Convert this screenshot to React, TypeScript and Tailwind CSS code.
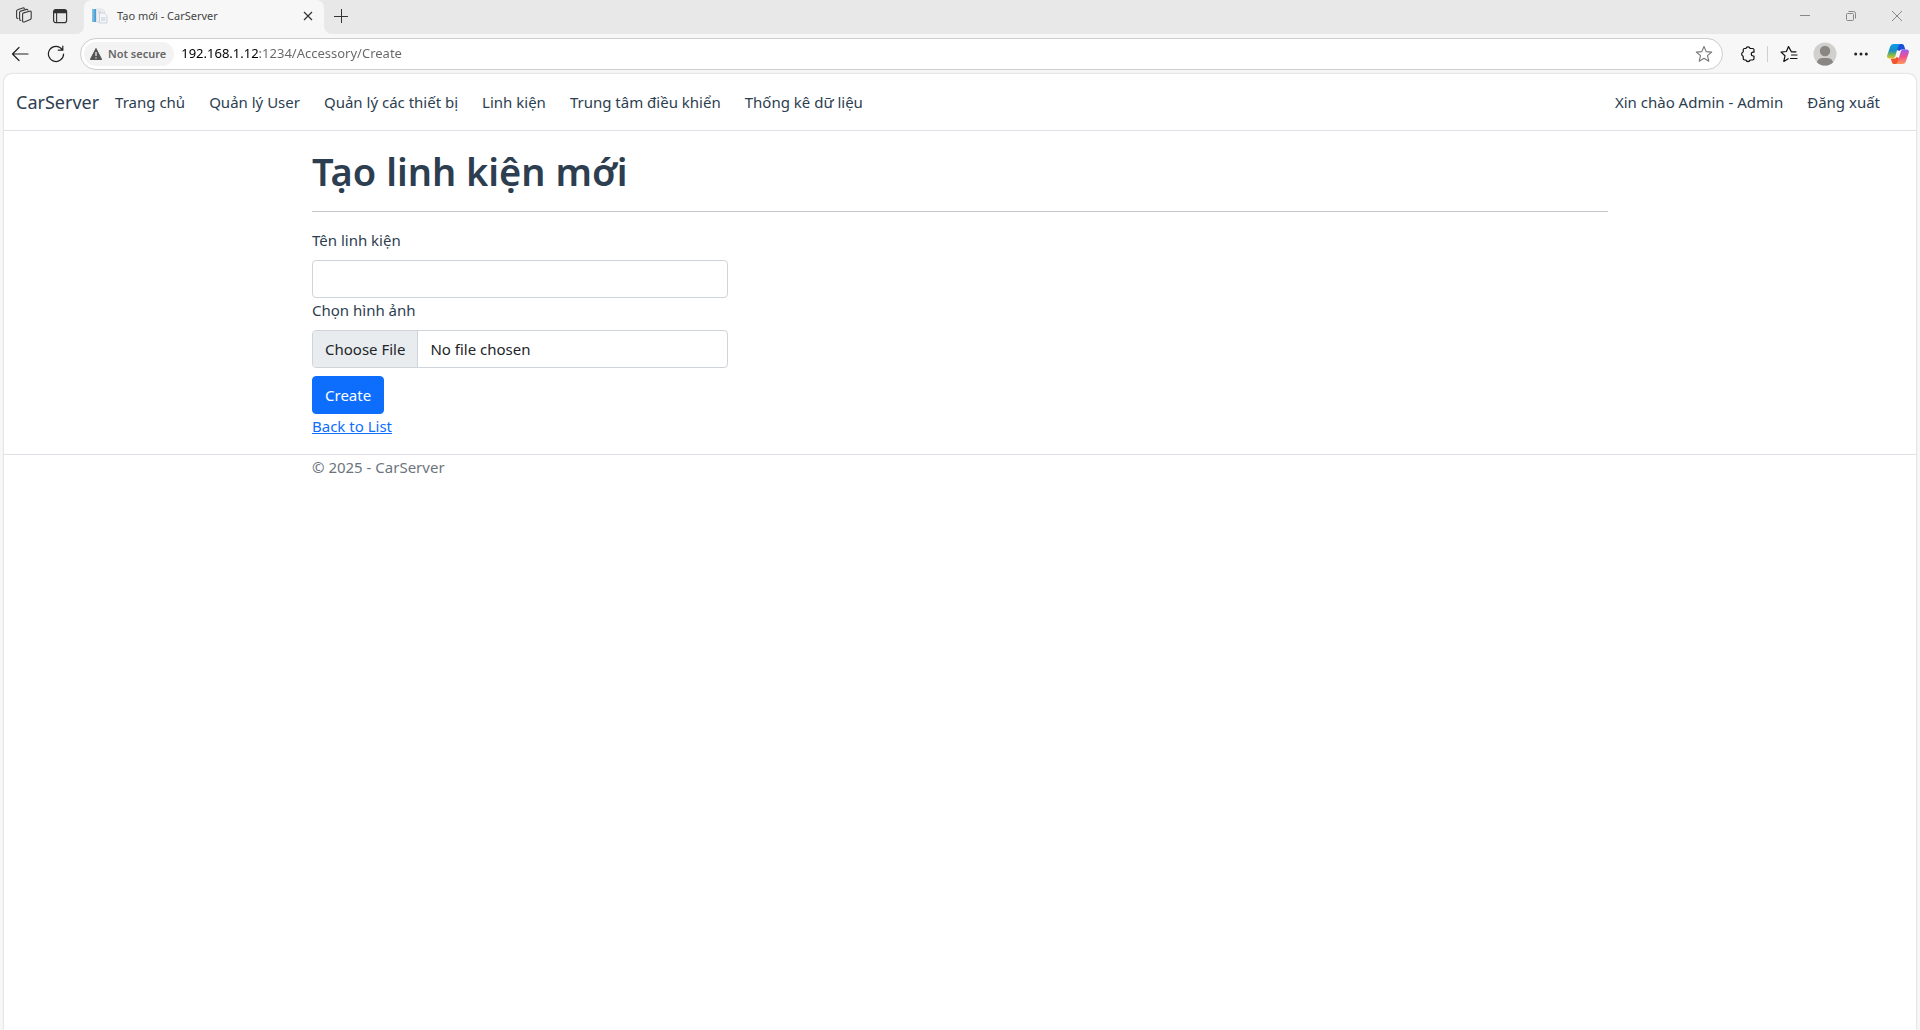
import React from 'react';

const menu = [
  'Trang chủ',
  'Quản lý User',
  'Quản lý các thiết bị',
  'Linh kiện',
  'Trung tâm điều khiển',
  'Thống kê dữ liệu',
];

function IconButton({ label, className, children }: { label: string; className?: string; children: React.ReactNode }) {
  return (
    <button type="button" aria-label={label} className={`flex shrink-0 items-center justify-center ${className ?? ''}`}>
      {children}
    </button>
  );
}

function WorkspacesIcon() {
  return (
    <svg width="18" height="18" viewBox="0 0 18 18" fill="none" stroke="#3b3b3b" strokeWidth="1.1" strokeLinejoin="round" strokeLinecap="round">
      <path d="M7.600 7.200q0-1 1-1.300l6-1.700q1.600-.4 1.600 1v5.900q0 1-.9 1.400l-6 2.400q-1.700.6-1.700-1z" />
      <path d="M5.800 13.400q-1.200 0-1.200-1.200V5.400q0-1 1-1.300l5.700-1.700q1.400-.3 1.600.8" />
      <path d="M2.900 11.500q-1.300 0-1.300-1.300V4q0-1 1-1.300L7.800 1q1.200-.3 1.600.5" />
    </svg>
  );
}

function TabActionsIcon() {
  return (
    <svg width="16" height="16" viewBox="0 0 16 16" fill="none">
      <rect x="1.600" y="1.600" width="13" height="13" rx="2.200" stroke="#333" strokeWidth="1.200" />
      <path d="M1.500 5.200V3.600q0-2.100 2.100-2.100h8.800q2.100 0 2.100 2.100v1.600z" fill="#333" />
      <path d="M4.600 5v9.500" stroke="#333" strokeWidth="1.100" />
    </svg>
  );
}

function PageIcon() {
  return (
    <svg width="16" height="16" viewBox="0 0 16 16" fill="none">
      <defs>
        <linearGradient id="page-spine">
          <stop offset="0" stopColor="#8cc8ea" />
          <stop offset="1" stopColor="#4096cc" />
        </linearGradient>
      </defs>
      <path d="M0 1h4v13H0z" fill="url(#page-spine)" />
      <path d="M4.500 1h6l2 2v11h-8z" fill="#eceef2" stroke="#d8dbe0" strokeWidth=".8" />
      <path d="M7.500 5h5l2.500 2.500V15H7.500z" fill="#f5f6f9" stroke="#c4cad5" strokeWidth=".8" />
      <path d="M9 10h4.500M9 12h4.500M6 4h3" stroke="#c0cadb" />
    </svg>
  );
}

function StarIcon() {
  return (
    <svg width="18" height="18" viewBox="0 0 18 18" fill="none" stroke="#777" strokeWidth="1.100" strokeLinejoin="round">
      <path d="m9 1.500 2.200 5.100 5.500.5-4.200 3.600 1.300 5.500L9 13.300l-4.800 2.900 1.300-5.500L1.300 7.100l5.500-.5z" />
    </svg>
  );
}

function PuzzleIcon() {
  return (
    <svg width="18" height="18" viewBox="0 0 18 18" fill="none" stroke="#111" strokeWidth="1.200" strokeLinejoin="round">
      <path d="M6.900 3.500a2.200 2.200 0 0 1 4.200 0h2.400q1.500 0 1.500 1.400v2.300h-.8a1.900 1.900 0 0 0 0 3.800h.8v2.600q0 1.400-1.500 1.400h-2.400a2.200 2.200 0 0 1-4.200 0H5.600q-1.400 0-1.400-1.400V11.200a2.200 2.200 0 0 1 0-4.200V4.900q0-1.400 1.400-1.400z" />
    </svg>
  );
}

function FavoritesIcon() {
  return (
    <svg width="18" height="18" viewBox="0 0 18 18" fill="none" stroke="#111" strokeWidth="1.200" strokeLinejoin="round" strokeLinecap="round">
      <path d="M16 6.800h-4.600L8.500 1.600 6.400 6.500 1 7.100l4 3.700-1.200 5.600 4.400-2.700" />
      <path d="M11.500 10H17M10.500 13.500H17" />
    </svg>
  );
}

function ProfileIcon() {
  return (
    <svg width="24" height="24" viewBox="0 0 24 24">
      <defs>
        <clipPath id="profile-disc">
          <circle cx="12" cy="12" r="11.500" />
        </clipPath>
      </defs>
      <circle cx="12" cy="12" r="11.500" fill="#d2d0ce" />
      <g fill="#8a8683" clipPath="url(#profile-disc)">
        <circle cx="12" cy="9" r="5.200" />
        <path d="M3.500 24q0-8 6-8h5q6 0 6 8z" />
      </g>
    </svg>
  );
}

function CopilotIcon() {
  return (
    <svg width="24" height="24" viewBox="0 0 24 24">
      <defs>
        <linearGradient id="cp-left" x1="0" y1="0" x2="0" y2="1">
          <stop offset="0" stopColor="#0a9bea" />
          <stop offset=".45" stopColor="#1a90c5" />
          <stop offset=".75" stopColor="#7cb950" />
          <stop offset="1" stopColor="#f0c820" />
        </linearGradient>
        <linearGradient id="cp-right" x1="0" y1="0" x2="0" y2="1">
          <stop offset="0" stopColor="#9a5cf5" />
          <stop offset=".5" stopColor="#f0508d" />
          <stop offset="1" stopColor="#ff9a5a" />
        </linearGradient>
      </defs>
      <path d="M11 2h5q1.500 0 2 1.500L19.300 7.500h-3.800q-1.500 0-2 1.500L11 8z" fill="#1b4fd8" />
      <path d="M13 22H8q-1.500 0-2-1.500L4.700 16.500h3.800q1.500 0 2-1.500L13 16z" fill="#f0562f" />
      <path d="M14.500 2H7.300Q5 2 4.200 4.500L1.300 13Q.3 16.500 3.600 16.500h3.400q1.600 0 2.200-2L12 5Q12.600 2.500 14.500 2z" fill="url(#cp-left)" />
      <path d="M9.500 22h7.200q2.300 0 3.100-2.500l2.900-8.500q1-3.500-2.300-3.500H17q-1.600 0-2.200 2L12 19Q11.400 21.500 9.500 22z" fill="url(#cp-right)" />
    </svg>
  );
}

function TabStrip() {
  return (
    <div className="flex h-[34px] items-stretch bg-[#e8e8e8]">
      <div className="flex w-[84px] shrink-0 items-stretch bg-[#f7f7f7]">
        <div className="flex flex-1 items-center gap-[19px] rounded-br-lg bg-[#e8e8e8] pb-0.5 pl-[15px]">
          <IconButton label="Workspaces"><WorkspacesIcon /></IconButton>
          <IconButton label="Tab actions"><TabActionsIcon /></IconButton>
        </div>
      </div>
      <div className="flex w-60 shrink-0 items-center rounded-t-lg bg-[#f7f7f7] px-2 pb-0.5">
        <PageIcon />
        <span className="ml-[9px] flex-1 text-[11px] text-[#444]">Tạo mới - CarServer</span>
        <IconButton label="Close tab" className="size-4">
          <svg width="10" height="10" viewBox="0 0 10 10" stroke="#333" strokeWidth="1.200"><path d="m1 1 8 8M9 1 1 9" /></svg>
        </IconButton>
      </div>
      <div className="flex flex-1 items-stretch bg-[#f7f7f7]">
        <div className="flex flex-1 items-center rounded-bl-lg bg-[#e8e8e8] pb-0.5 pl-2 pr-[17px]">
          <IconButton label="New tab" className="size-[18px]">
            <svg width="14" height="14" viewBox="0 0 14 14" stroke="#333" strokeWidth="1"><path d="M7.500 0v14M0 7.500h14" /></svg>
          </IconButton>
          <div className="ml-auto flex items-center gap-[34px]">
            <IconButton label="Minimize" className="size-3">
              <svg width="10" height="10" viewBox="0 0 10 10" stroke="#888"><path d="M0 4.500h10" /></svg>
            </IconButton>
            <IconButton label="Restore" className="size-3">
              <svg width="10" height="10" viewBox="0 0 10 10" fill="none" stroke="#888"><rect x=".5" y="2.500" width="7" height="7" rx="1" /><path d="M2.500.5h5q2 0 2 2v5" /></svg>
            </IconButton>
            <IconButton label="Close window" className="size-3">
              <svg width="10" height="10" viewBox="0 0 10 10" stroke="#888"><path d="m0 0 10 10M10 0 0 10" /></svg>
            </IconButton>
          </div>
        </div>
      </div>
    </div>
  );
}

function AddressBar() {
  return (
    <div className="flex h-10 items-center bg-[#f7f7f7] px-2.5">
      <IconButton label="Back" className="size-5">
        <svg width="18" height="16" viewBox="0 0 18 16" fill="none" stroke="#222" strokeWidth="1.200" strokeLinecap="round" strokeLinejoin="round"><path d="M17 8H1.500M8 1.500 1.500 8 8 14.500" /></svg>
      </IconButton>
      <IconButton label="Refresh" className="ml-4 size-5">
        <svg width="18" height="18" viewBox="0 0 18 18" fill="none" stroke="#222" strokeWidth="1.200" strokeLinecap="round"><path d="M15.200 4.500A7.600 7.600 0 1 0 16.600 9M15.800 1v4.200h-4.500" /></svg>
      </IconButton>
      <div className="ml-3.5 flex h-8 flex-1 items-center rounded-full border border-[#cdcdcd] bg-white pl-[3px] pr-[9px]">
        <button type="button" className="flex h-6 shrink-0 items-center gap-1.5 rounded-full bg-[#f3f3f3] pl-1.5 pr-2 text-[11px] font-semibold text-[#666]">
          <svg width="12" height="12" viewBox="0 0 12 12"><path d="M6 .5 11.700 11.500H.3z" fill="#555" stroke="#555" strokeLinejoin="round" /><path d="M6 4v4M6 9.200v1.200" stroke="#f3f3f3" strokeWidth="1.200" /></svg>
          Not secure
        </button>
        <input
          type="text"
          aria-label="Address"
          defaultValue="192.168.1.12:1234/Accessory/Create"
          className="ml-[7px] min-w-0 flex-1 bg-linear-to-r from-black from-[78px] to-[#666] to-[78px] bg-clip-text text-[13px] text-transparent caret-black outline-none"
        />
        <IconButton label="Add to favorites"><StarIcon /></IconButton>
      </div>
      <div className="ml-4 flex items-center">
        <IconButton label="Extensions"><PuzzleIcon /></IconButton>
        <span className="ml-2.5 h-4 w-px bg-[#d0d0d0]" />
        <IconButton label="Favorites" className="ml-3"><FavoritesIcon /></IconButton>
        <IconButton label="Profile" className="ml-[15px]"><ProfileIcon /></IconButton>
        <IconButton label="Settings and more" className="ml-3.5 size-5">
          <svg width="14" height="4" viewBox="0 0 14 4" fill="#222"><circle cx="1.700" cy="2" r="1.500" /><circle cx="7" cy="2" r="1.500" /><circle cx="12.300" cy="2" r="1.500" /></svg>
        </IconButton>
        <IconButton label="Copilot" className="ml-[15px]"><CopilotIcon /></IconButton>
      </div>
    </div>
  );
}

function Navbar() {
  return (
    <header className="border-b border-[#dee2e6]">
      <nav className="flex h-14 items-center px-3">
        <a href="#" className="mr-4 text-[18px] leading-[30px]">CarServer</a>
        <ul className="flex flex-1 gap-6">
          {menu.map((item) => (
            <li key={item}><a href="#">{item}</a></li>
          ))}
        </ul>
        <ul className="flex gap-6 pr-6">
          <li><a href="#">Xin chào Admin - Admin</a></li>
          <li><a href="#">Đăng xuất</a></li>
        </ul>
      </nav>
    </header>
  );
}

export default function App() {
  return (
    <div className="flex min-h-screen flex-col bg-[#f7f7f7] font-['Noto_Sans',sans-serif]">
      <TabStrip />
      <AddressBar />
      <div className="mx-1 flex-1 rounded-t-lg bg-white text-[15px] leading-6 text-[#2c3e50] shadow-[0_0_2px_rgba(0,0,0,0.25)]">
        <Navbar />
        <main className="mx-auto max-w-[1296px] py-4">
          <h1 className="text-[38px] font-semibold leading-[48px]">Tạo linh kiện mới</h1>
          <hr className="my-4 h-px border-0 bg-[#c3c6ca]" />
          <form className="max-w-[416px]" onSubmit={(e) => e.preventDefault()}>
            <label htmlFor="accessory-name" className="mb-2 block">Tên linh kiện</label>
            <input id="accessory-name" type="text" className="block h-[38px] w-full rounded border border-[#ced4da] px-3 text-[#212529]" />
            <label htmlFor="accessory-image" className="mb-2 block">Chọn hình ảnh</label>
            <input
              id="accessory-image"
              type="file"
              className="block h-[38px] w-full overflow-hidden rounded border border-[#ced4da] text-[#212529] file:mr-3 file:h-9 file:border-r file:border-[#ced4da] file:bg-[#e9ecef] file:px-3 file:text-[#212529]"
            />
            <button type="submit" className="mt-2 block h-[38px] rounded border border-[#0d6efd] bg-[#0d6efd] px-3 text-white">Create</button>
          </form>
          <a href="#" className="text-[#0d6efd] underline">Back to List</a>
        </main>
        <footer className="border-t border-[#dee2e6] text-[#6c757d]">
          <p className="mx-auto max-w-[1296px]">© 2025 - CarServer</p>
        </footer>
      </div>
    </div>
  );
}
